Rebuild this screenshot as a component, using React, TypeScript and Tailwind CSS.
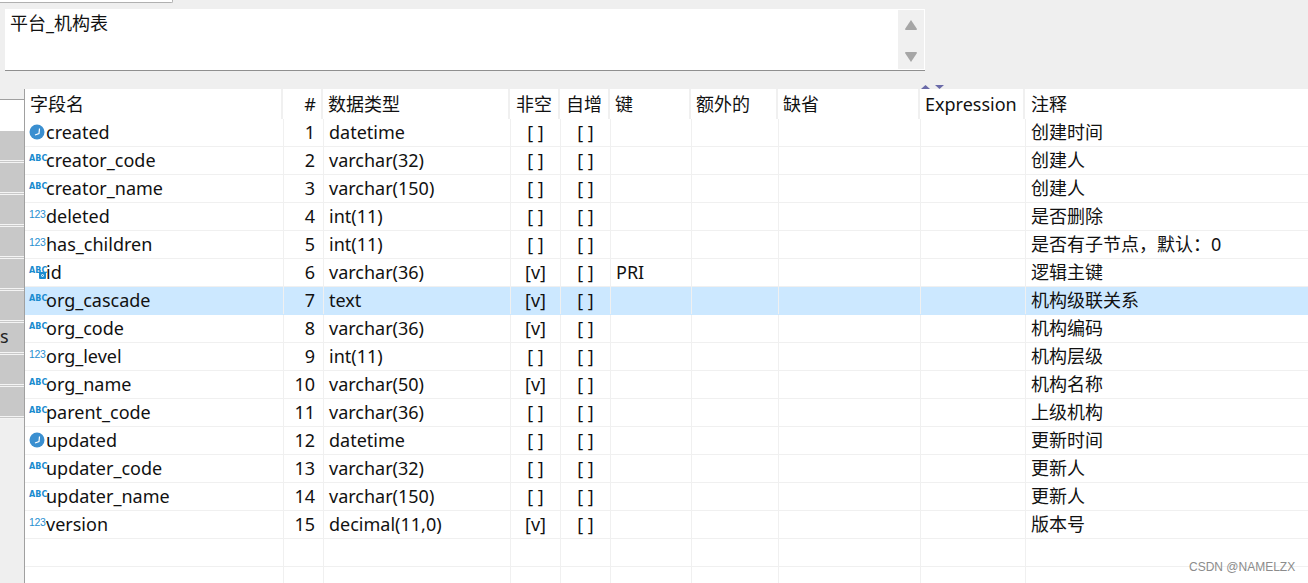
import { FC } from "react";

type Kind = "date" | "abc" | "num" | "key";

const rows: { name: string; kind: Kind; type: string; notNull?: boolean; key?: string; note: string }[] = [
  { name: "created", kind: "date", type: "datetime", note: "创建时间" },
  { name: "creator_code", kind: "abc", type: "varchar(32)", note: "创建人" },
  { name: "creator_name", kind: "abc", type: "varchar(150)", note: "创建人" },
  { name: "deleted", kind: "num", type: "int(11)", note: "是否删除" },
  { name: "has_children", kind: "num", type: "int(11)", note: "是否有子节点，默认：0" },
  { name: "id", kind: "key", type: "varchar(36)", notNull: true, key: "PRI", note: "逻辑主键" },
  { name: "org_cascade", kind: "abc", type: "text", notNull: true, note: "机构级联关系" },
  { name: "org_code", kind: "abc", type: "varchar(36)", notNull: true, note: "机构编码" },
  { name: "org_level", kind: "num", type: "int(11)", note: "机构层级" },
  { name: "org_name", kind: "abc", type: "varchar(50)", notNull: true, note: "机构名称" },
  { name: "parent_code", kind: "abc", type: "varchar(36)", note: "上级机构" },
  { name: "updated", kind: "date", type: "datetime", note: "更新时间" },
  { name: "updater_code", kind: "abc", type: "varchar(32)", note: "更新人" },
  { name: "updater_name", kind: "abc", type: "varchar(150)", note: "更新人" },
  { name: "version", kind: "num", type: "decimal(11,0)", notNull: true, note: "版本号" },
];

const FieldIcon: FC<{ kind: Kind }> = ({ kind }) => {
  if (kind === "date") {
    return (
      <svg width="16" height="16" viewBox="0 0 16 16" className="shrink-0 mr-[1px] mb-[2px]">
        <circle cx="8" cy="8" r="7.5" fill="#3a8fd0" />
        <path d="M10.5 4.5 L10 9.5 L6 11" stroke="#fff" strokeWidth="1.2" fill="none" />
      </svg>
    );
  }
  if (kind === "num") {
    return (
      <span className="w-[17px] shrink-0 text-[10.5px] leading-none text-[#2a8fd0] tracking-[-0.3px] mb-[4px] font-['Liberation_Sans',sans-serif]">
        123
      </span>
    );
  }
  return (
    <span className="relative w-[17px] shrink-0 text-[8px] leading-none font-bold text-[#1a8ccf] mb-[4px] tracking-[0.1px] font-['DejaVu_Sans',sans-serif] whitespace-nowrap">
      ABC
      {kind === "key" && (
        <span className="absolute left-[10px] top-[5px] w-[7px] h-[7px] bg-[#1a8ccf] rounded-[1px] flex items-center justify-center">
          <span className="w-[3px] h-[3px] border border-white rounded-full" />
        </span>
      )}
    </span>
  );
};

const COLS = "grid grid-cols-[259px_40px_187px_50px_50px_81px_87px_142px_105px_1fr]";
const HEADER_COLS = "grid grid-cols-[258px_40px_187px_50px_50px_81px_87px_142px_105px_1fr]";
const CELL = "h-full border-r border-[#f0f0f0] flex items-center px-[5px] whitespace-nowrap";
const HEAD = "h-full border-r-2 border-[#f0f0f0] flex items-center px-[5px] whitespace-nowrap";

const App: FC = () => {
  return (
    <div className="relative w-[1308px] h-[583px] overflow-hidden bg-[#efefef] text-[18px] text-[#111] font-['Noto_Sans','Noto_Sans_CJK_SC',sans-serif]">
      {/* Top strip */}
      <div className="h-[9px]">
        <div className="w-[173px] h-[3px] bg-white border-b border-r border-[#b0b0b0] rounded-br-[2px]" />
      </div>

      {/* Comment box */}
      <div className="ml-[5px] w-[920px] h-[62px] bg-white border-b border-[#8f8f8f] flex">
        <div className="flex-1 pl-[5px] leading-[28px]">平台_机构表</div>
        <div className="w-[26px] h-[59px] mt-[1px] mr-[1px] bg-[#f0f0f0] flex flex-col items-center justify-between pt-[10px] pb-[7px]">
          <svg width="12" height="10" viewBox="0 0 12 10">
            <path d="M6 0 L12 9 Q12 10 11 10 L1 10 Q0 10 0 9 Z" fill="#a6a6a6" />
          </svg>
          <svg width="12" height="10" viewBox="0 0 12 10">
            <path d="M6 10 L12 1 Q12 0 11 0 L1 0 Q0 0 0 1 Z" fill="#a6a6a6" />
          </svg>
        </div>
      </div>

      {/* Sort markers */}
      <div className="h-[18px] flex items-end pl-[921px] gap-[5px]">
        <svg width="9" height="4" viewBox="0 0 9 4"><path d="M4.5 0 L9 4 L0 4 Z" fill="#6a6aa8" /></svg>
        <svg width="9" height="4" viewBox="0 0 9 4"><path d="M4.5 4 L9 0 L0 0 Z" fill="#6a6aa8" /></svg>
      </div>

      <div className="flex">
        {/* Left rail */}
        <div className="w-[25px] shrink-0 border-r border-[#a0a0a0] h-[494px] flex flex-col">
          <div className="h-[11px] border-b border-[#a0a0a0]" />
          <div className="h-[31px] bg-white" />
          {Array.from({ length: 9 }).map((_, i) => (
            <div key={i} className="h-[32px] bg-[#c8c8c8] border-b-[3px] border-double border-[#f4f4f4] flex items-center text-[#222]">
              {i === 6 ? <span className="leading-none mb-[4px]">s</span> : null}
            </div>
          ))}
        </div>

        {/* Column grid */}
        <div className="flex-1 bg-white">
          <div className={`${HEADER_COLS} h-[30px]`}>
            <div className={HEAD}>字段名</div>
            <div className={`${HEAD} justify-end`}>#</div>
            <div className={HEAD}>数据类型</div>
            <div className={`${HEAD} justify-center`}>非空</div>
            <div className={`${HEAD} justify-center`}>自增</div>
            <div className={HEAD}>键</div>
            <div className={HEAD}>额外的</div>
            <div className={HEAD}>缺省</div>
            <div className={HEAD}>Expression</div>
            <div className="h-full flex items-center px-[6px]">注释</div>
          </div>

          {rows.map((row, i) => (
            <div
              key={row.name}
              className={`${COLS} h-[28px] border-b ${row.name === "org_cascade" ? "bg-[#cce8ff] border-[#cce8ff]" : "border-[#f0f0f0]"}`}
            >
              <div className={`${CELL} !px-0 pl-[4px]`}>
                <span className="w-[4px] shrink-0" />
                <FieldIcon kind={row.kind} />
                <span>{row.name}</span>
              </div>
              <div className={`${CELL} justify-end pr-[8px]`}>{i + 1}</div>
              <div className={CELL}>{row.type}</div>
              <div className={`${CELL} justify-center`}>{row.notNull ? "[v]" : "[ ]"}</div>
              <div className={`${CELL} justify-center`}>[ ]</div>
              <div className={CELL}>{row.key}</div>
              <div className={CELL} />
              <div className={CELL} />
              <div className={CELL} />
              <div className="h-full flex items-center px-[5px] whitespace-nowrap">{row.note}</div>
            </div>
          ))}

          {[0, 1].map((n) => (
            <div key={n} className={`${COLS} h-[28px] border-b border-[#f0f0f0]`}>
              {Array.from({ length: 10 }).map((_, c) => (
                <div key={c} className={c < 9 ? CELL : "h-full"} />
              ))}
            </div>
          ))}
        </div>
      </div>

      {/* Watermark */}
      <div className="absolute left-[1189px] top-[560px] text-[12px] leading-[15px] text-[#8c8c8c] font-['Liberation_Sans',sans-serif] whitespace-nowrap">
        CSDN @NAMELZX
      </div>
    </div>
  );
};

export default App;
